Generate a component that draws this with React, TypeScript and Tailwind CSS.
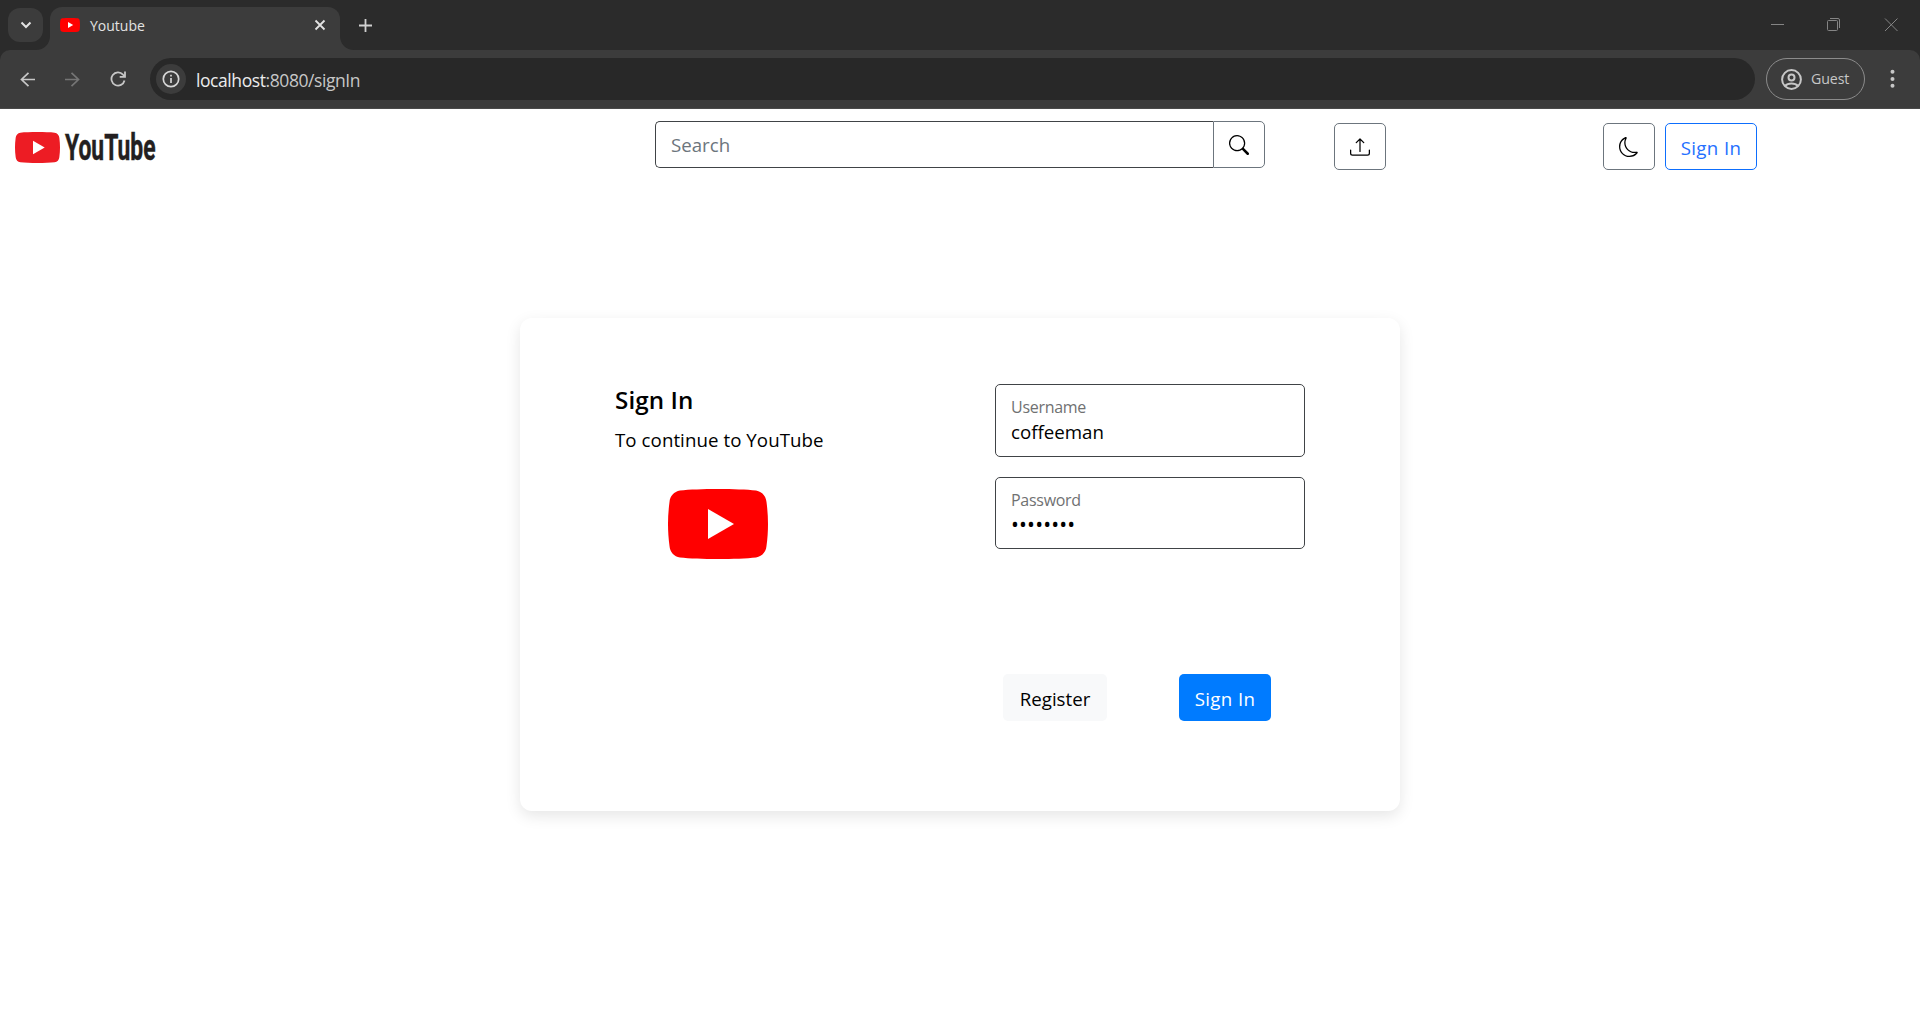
import type { ReactNode } from "react";
import { BsMoon, BsSearch, BsUpload } from "react-icons/bs";

function PlayBadge({ className, color = "#ff0000" }: { className: string; color?: string }) {
  return (
    <svg className={className} viewBox="0 0 100 70" preserveAspectRatio="none">
      <path
        fill={color}
        d="M12 1.5C30 -.5 70 -.5 88 1.5C94 2.5 98 7 98.5 13C100.5 28 100.5 42 98.5 57C98 63 94 67.500 88 68.500C70 70.500 30 70.500 12 68.500C6 67.500 2 63 1.500 57C-.5 42 -.5 28 1.500 13C2 7 6 2.500 12 1.500Z"
      />
      <path fill="#fff" d="M40 20L66 35L40 50Z" />
    </svg>
  );
}

function TabStrip() {
  return (
    <div className="flex h-[50px] bg-[#2b2b2b]">
      <div className="flex w-[50px] pl-2 pt-2">
        <button className="flex h-[34px] w-[35px] items-center justify-center rounded-[12px] bg-[#3c3c3c]">
          <svg className="size-[12px]" viewBox="0 0 12 12" fill="none" stroke="#e3e3e3" strokeWidth="2">
            <path d="M1.500 3.500L6 8L10.500 3.500" />
          </svg>
        </button>
      </div>
      <div className="relative mt-[7px] flex h-[43px] w-[290px] items-center rounded-t-[12px] bg-[#3c3c3c] pb-[7px] pl-[10px] pr-[13px]">
        <svg className="absolute -left-[14px] bottom-0 size-[14px]" viewBox="0 0 14 14">
          <path d="M14 0V14H0C8 14 14 8 14 0Z" fill="#3c3c3c" />
        </svg>
        <svg className="absolute -right-[14px] bottom-0 size-[14px]" viewBox="0 0 14 14">
          <path d="M0 0V14H14C6 14 0 8 0 0Z" fill="#3c3c3c" />
        </svg>
        <PlayBadge className="h-[14px] w-5" />
        <span className="ml-[10px] pt-[2px] text-[14px] leading-5 text-[#e3e3e3]">Youtube</span>
        <svg className="ml-auto size-[14px]" viewBox="0 0 14 14" fill="none" stroke="#e3e3e3" strokeWidth="1.800">
          <path d="M2.500 2.500L11.500 11.500M11.500 2.500L2.500 11.500" />
        </svg>
      </div>
      <svg className="ml-[18px] mt-[18px] size-[14px]" viewBox="0 0 14 14" stroke="#d0d0d0" strokeWidth="1.800">
        <path d="M7.500 1V14M1 7.500H14" />
      </svg>
      <div className="ml-auto flex gap-[43px] pr-[21px] pt-[17px]">
        <svg className="h-[14px] w-[15px]" viewBox="0 0 15 14" stroke="#858585">
          <path d="M2 7.500H15" />
        </svg>
        <svg className="h-[15px] w-[14px]" viewBox="0 0 14 15" fill="none" stroke="#858585">
          <rect x=".5" y="3.500" width="10" height="10" rx="1" />
          <path d="M3 1.500H11Q12.500 1.500 12.500 3V11" />
        </svg>
        <svg className="size-[15px]" viewBox="0 0 15 15" stroke="#858585">
          <path d="M1 1.500L13.500 14M13.500 1.500L1 14" />
        </svg>
      </div>
    </div>
  );
}

function Toolbar() {
  return (
    <div className="bg-[#2b2b2b]">
      <div className="flex h-[59px] items-center rounded-t-[10px] border-b border-[#4a4a4a] bg-[#3c3c3c]">
        <div className="flex w-[150px] items-center gap-[30px] pl-5">
          <svg className="size-[15px]" viewBox="0 0 15 15" fill="none" stroke="#c7c7c7" strokeWidth="1.700">
            <path d="M15 7.500H1.500M8.500 .8L1.500 7.500L8.500 14.200" />
          </svg>
          <svg className="size-[15px]" viewBox="0 0 15 15" fill="none" stroke="#757575" strokeWidth="1.700">
            <path d="M0 7.500H13.500M6.500 .8L13.500 7.500L6.500 14.200" />
          </svg>
          <svg className="size-[16px]" viewBox="0 0 16 16" fill="none" stroke="#c7c7c7" strokeWidth="1.800">
            <path d="M14.500 9.500A6.600 6.600 0 1 1 13 3.600L15 5.600M15 .5V5.800H9.700" />
          </svg>
        </div>
        <div className="flex h-[42px] w-[1605px] items-center rounded-full bg-[#282828] pl-[6px]">
          <div className="flex size-[30px] items-center justify-center rounded-full bg-[#3c3c3c]">
            <svg className="size-[18px]" viewBox="0 0 18 18" fill="none" stroke="#d6d6d6" strokeWidth="1.700">
              <circle cx="9" cy="9" r="7.700" />
              <path d="M9 8V13M9 4.700V6.500" />
            </svg>
          </div>
          <span className="ml-[10px] pt-px text-[17.500px] leading-6 tracking-[-0.42px] text-[#c7c7c7]">
            <span className="text-[#ececec]">localhost</span>:8080/signIn
          </span>
        </div>
        <div className="ml-[11px] flex h-[42px] w-[99px] items-center rounded-full border border-[#8c8c8c] pl-[14px] text-[#c7c7c7]">
          <svg className="size-[21px]" viewBox="0 0 21 21" fill="none" stroke="#c7c7c7" strokeWidth="2">
            <circle cx="10.500" cy="10.500" r="9.400" />
            <circle cx="10.500" cy="8.500" r="3" />
            <path d="M4 17C7 13.600 14 13.600 17 17" />
          </svg>
          <span className="ml-[9px] text-[14.200px] leading-5 tracking-[-0.1px]">Guest</span>
        </div>
        <svg className="ml-[25px] h-5 w-[5px]" viewBox="0 0 5 20" fill="#c7c7c7">
          <circle cx="2.500" cy="2.800" r="2" />
          <circle cx="2.500" cy="10" r="2" />
          <circle cx="2.500" cy="16.800" r="2" />
        </svg>
      </div>
    </div>
  );
}

function IconButton({ className = "", children }: { className?: string; children: ReactNode }) {
  return (
    <button className={`flex h-[47px] w-[52px] items-center justify-center rounded-[5px] border border-[#6c757d] text-black ${className}`}>
      {children}
    </button>
  );
}

function SiteHeader() {
  return (
    <header className="flex h-[75px] items-start pl-[15px] pt-[12px]">
      <a className="mt-[11px] flex w-[640px]">
        <PlayBadge className="h-[31px] w-[45px]" color="#ed1c24" />
        <svg className="ml-1 h-[44px] w-[110px] overflow-visible" viewBox="0 0 110 44">
          <text
            x="1"
            y="28.300"
            fill="#231f20"
            stroke="#231f20"
            strokeWidth=".5"
            fontFamily="Roboto"
            fontWeight="700"
            fontSize="36.500"
            textLength="90.500"
            lengthAdjust="spacingAndGlyphs"
          >
            YouTube
          </text>
        </svg>
      </a>
      <div className="flex h-[47px] w-[610px] text-[18.700px]">
        <div className="flex w-[559px] items-center rounded-l-[5px] border border-r-0 border-[#404346] pl-[15px] leading-[30px] text-[#6c757d]">
          Search
        </div>
        <button className="flex w-[52px] items-center justify-center rounded-r-[5px] border border-[#6c757d] text-black">
          <BsSearch className="size-5" />
        </button>
      </div>
      <IconButton className="ml-[69px] mt-[2px]">
        <BsUpload className="size-5" />
      </IconButton>
      <IconButton className="ml-[217px] mt-[2px]">
        <BsMoon className="size-5" />
      </IconButton>
      <button className="ml-[10px] mt-[2px] h-[47px] w-[92px] rounded-[5px] border border-[#0d6efd] pt-[3px] text-[18.700px] tracking-[0.36px] text-[#2470ff]">
        Sign In
      </button>
    </header>
  );
}

function SignInCard() {
  return (
    <main className="mx-auto mt-[134px] flex h-[493px] w-[880px] rounded-[12px] bg-white shadow-[0_5px_15px_rgba(0,0,0,0.1)]">
      <section className="w-[475px] pl-[95px] pt-[67px] text-black">
        <h1 className="text-[24.200px] font-semibold leading-[30px] tracking-[0.1px]">Sign In</h1>
        <p className="mt-[10px] text-[18.700px] leading-[30px] tracking-[0.06px]">To continue to YouTube</p>
        <PlayBadge className="ml-[53px] mt-[34px] h-[70px] w-[100px]" />
      </section>
      <section className="w-[310px] pt-[66px]">
        <div className="h-[73px] rounded-[5px] border border-[#404346] pl-[15px] pt-[10px]">
          <label className="block text-[16px] leading-6 tracking-[-0.28px] text-[#707172]">Username</label>
          <div className="text-[18.700px] leading-[26px] text-black">coffeeman</div>
        </div>
        <div className="mt-5 h-[72px] rounded-[5px] border border-[#404346] pl-[15px] pt-[10px]">
          <label className="block text-[16px] leading-6 tracking-[-0.28px] text-[#707172]">Password</label>
          <div className="text-[21px] leading-[24px] tracking-[0.15px] text-black">••••••••</div>
        </div>
        <div className="mt-[125px] flex gap-[72px] pl-2 text-[18.700px]">
          <button className="h-[47px] w-[104px] rounded-[5px] bg-[#f8f9fa] pt-[3px] text-black">Register</button>
          <button className="h-[47px] w-[92px] rounded-[5px] bg-[#007bff] pt-[3px] tracking-[0.36px] text-white">Sign In</button>
        </div>
      </section>
    </main>
  );
}

export default function App() {
  return (
    <div className="h-[1020px] w-[1920px] overflow-hidden bg-white font-['Open_Sans',sans-serif]">
      <TabStrip />
      <Toolbar />
      <SiteHeader />
      <SignInCard />
    </div>
  );
}
